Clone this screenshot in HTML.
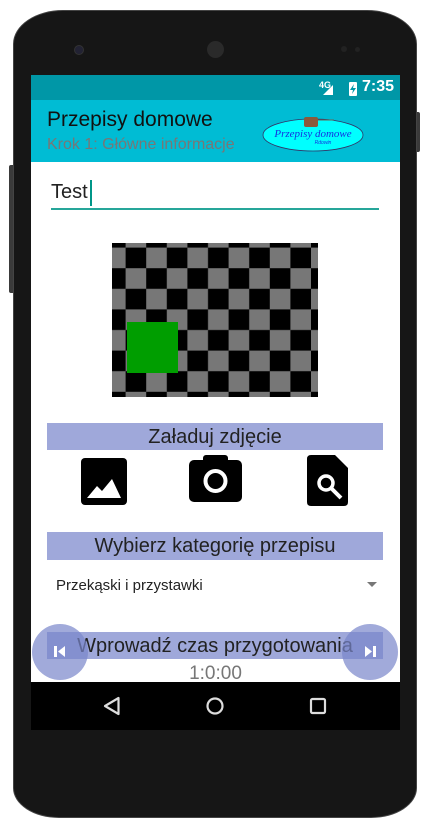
<!DOCTYPE html>
<html><head><meta charset="utf-8"><style>
html,body{margin:0;padding:0;width:429px;height:832px;overflow:hidden;background:#fff;font-family:"Liberation Sans","DejaVu Sans",sans-serif}
.abs{position:absolute}
.ban{position:absolute;left:47px;width:336px;height:27px;background:#9fa8da;color:#222;font-size:20px;text-align:center;line-height:28px}
</style></head><body>
<div class="abs" style="left:9px;top:165px;width:6px;height:128px;background:#3a3a3a;border-radius:2px"></div>
<div class="abs" style="left:414px;top:112px;width:6px;height:40px;background:#3a3a3a;border-radius:2px"></div>
<div class="abs" style="left:13px;top:10px;width:404px;height:808px;background:#161616;border-radius:50px 50px 46px 46px/34px 34px 30px 30px;border:1px solid #444;box-sizing:border-box"></div>
<div class="abs" style="left:75px;top:46px;width:8px;height:8px;border-radius:50%;background:#223;box-shadow:0 0 0 1px #333"></div>
<div class="abs" style="left:207px;top:41px;width:17px;height:17px;border-radius:50%;background:#2a2a2a"></div>
<div class="abs" style="left:341px;top:46px;width:6px;height:6px;border-radius:50%;background:#222"></div>
<div class="abs" style="left:355px;top:47px;width:5px;height:5px;border-radius:50%;background:#222"></div>

<div class="abs" style="left:31px;top:75px;width:369px;height:607px;background:#fff;overflow:hidden">
  <div class="abs" style="left:0;top:0;width:369px;height:25px;background:#0097a7"></div>
  <div class="abs" style="left:288px;top:5px;color:#fff;font-size:9px;font-weight:bold">4G</div>
  <svg class="abs" style="left:289px;top:6px" width="48" height="16"><polygon points="3,14 13,4 13,14" fill="#fff"/><rect x="29" y="1" width="8" height="14" rx="1" fill="#fff"/><polygon points="34,3 30,9 33,9 32,13 36,7 33,7" fill="#0097a7"/></svg>
  <div class="abs" style="left:331px;top:3px;color:#fff;font-size:16px;font-weight:bold">7:35</div>
  <div class="abs" style="left:0;top:25px;width:369px;height:62px;background:#00bcd4"></div>
  <div class="abs" style="left:16px;top:33px;font-size:21px;color:#111">Przepisy domowe</div>
  <div class="abs" style="left:16px;top:61px;font-size:16px;color:#777">Krok 1: Główne informacje</div>
  <svg class="abs" style="left:230px;top:40px" width="105" height="38"><ellipse cx="52" cy="20" rx="50" ry="16" fill="#00ffff" stroke="#336" stroke-width="0.8"/><rect x="43" y="2" width="14" height="10" rx="2" fill="#8b5a3c"/><line x1="57" y1="5" x2="73" y2="5" stroke="#665" stroke-width="1"/><text x="52" y="22" font-size="11" font-style="italic" font-family="Liberation Serif,serif" fill="#1530e0" text-anchor="middle">Przepisy domowe</text><text x="62" y="29" font-size="5" font-style="italic" fill="#1530e0" text-anchor="middle">Rdowin</text></svg>

  <div class="abs" style="left:20px;top:106px;font-size:20px;color:#222">Test</div>
  <div class="abs" style="left:59px;top:105px;width:2px;height:26px;background:#009688"></div>
  <div class="abs" style="left:20px;top:133px;width:328px;height:2px;background:#26a69a"></div>

  <svg class="abs" style="left:81px;top:168px" width="206" height="154">
    <defs><pattern id="p" x="-7" y="-16" width="41.2" height="41.2" patternUnits="userSpaceOnUse"><rect width="41.2" height="41.2" fill="#777"/><rect width="20.6" height="20.6" fill="#000"/><rect x="20.6" y="20.6" width="20.6" height="20.6" fill="#000"/></pattern></defs>
    <rect width="206" height="154" fill="url(#p)"/>
    <rect x="15" y="79" width="51" height="51" fill="#009e00"/>
  </svg>

  <div class="ban" style="left:16px;top:348px">Załaduj zdjęcie</div>
  <svg class="abs" style="left:50px;top:383px" width="46" height="47"><rect x="0" y="0" width="46" height="47" rx="4" fill="#000"/><polygon points="6,40 16,28 21,33 31,21 40,40" fill="#fff"/></svg>
  <svg class="abs" style="left:158px;top:380px" width="53" height="47"><rect x="0" y="5" width="53" height="42" rx="5" fill="#000"/><rect x="14" y="0" width="25" height="10" rx="3" fill="#000"/><circle cx="26.5" cy="26" r="10" fill="none" stroke="#fff" stroke-width="4"/></svg>
  <svg class="abs" style="left:276px;top:380px" width="42" height="51"><path d="M4 0 H28 L41 13 V47 Q41 51 37 51 H4 Q0 51 0 47 V4 Q0 0 4 0Z" fill="#000"/><circle cx="19" cy="28" r="7" fill="none" stroke="#fff" stroke-width="3.5"/><line x1="24" y1="33" x2="34" y2="43" stroke="#fff" stroke-width="4"/></svg>

  <div class="ban" style="left:16px;top:457px;height:28px">Wybierz kategorię przepisu</div>
  <div class="abs" style="left:25px;top:502px;font-size:15px;color:#222">Przekąski i przystawki</div>
  <div class="abs" style="left:336px;top:507px;width:0;height:0;border-left:5px solid transparent;border-right:5px solid transparent;border-top:5px solid #777"></div>

  <div class="ban" style="left:16px;top:557px">Wprowadź czas przygotowania</div>
  <div class="abs" style="left:0;top:588px;width:369px;text-align:center;font-size:19px;color:#777">1:0:00</div>
  <div class="abs" style="left:1px;top:549px;width:56px;height:56px;border-radius:50%;background:rgba(121,134,203,0.7)"></div>
  <div class="abs" style="left:311px;top:549px;width:56px;height:56px;border-radius:50%;background:rgba(121,134,203,0.7)"></div>
  <svg class="abs" style="left:21px;top:569px" width="16" height="16"><rect x="2" y="2" width="3" height="11" fill="#fff"/><polygon points="13,2 13,13 6,7.5" fill="#fff"/></svg>
  <svg class="abs" style="left:331px;top:569px" width="16" height="16"><polygon points="3,2 3,13 10,7.5" fill="#fff"/><rect x="11" y="2" width="3" height="11" fill="#fff"/></svg>
</div>
<div class="abs" style="left:31px;top:682px;width:369px;height:48px;background:#000"></div>
<svg class="abs" style="left:31px;top:682px" width="369" height="48">
  <polygon points="74,24 87.5,16 87.5,32" fill="none" stroke="#ddd" stroke-width="2.2" stroke-linejoin="round"/>
  <circle cx="184" cy="24" r="7.5" fill="none" stroke="#ddd" stroke-width="2.2"/>
  <rect x="280" y="17" width="14" height="14" rx="1.5" fill="none" stroke="#ddd" stroke-width="2.2"/>
</svg>
</body></html>
